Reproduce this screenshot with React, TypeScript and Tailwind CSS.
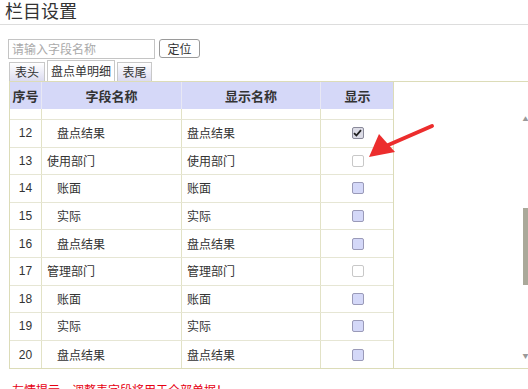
import React from "react";

type Row = {
  no: number;
  field: string;
  label: string;
  indent: boolean;
  state: "checked" | "off" | "blank";
};

const rows: Row[] = [
  { no: 12, field: "盘点结果", label: "盘点结果", indent: true, state: "checked" },
  { no: 13, field: "使用部门", label: "使用部门", indent: false, state: "blank" },
  { no: 14, field: "账面", label: "账面", indent: true, state: "off" },
  { no: 15, field: "实际", label: "实际", indent: true, state: "off" },
  { no: 16, field: "盘点结果", label: "盘点结果", indent: true, state: "off" },
  { no: 17, field: "管理部门", label: "管理部门", indent: false, state: "blank" },
  { no: 18, field: "账面", label: "账面", indent: true, state: "off" },
  { no: 19, field: "实际", label: "实际", indent: true, state: "off" },
  { no: 20, field: "盘点结果", label: "盘点结果", indent: true, state: "off" },
];

const Check = ({ state }: { state: Row["state"] }) => {
  if (state === "checked") {
    return (
      <span className="flex h-[12px] w-[12px] items-center justify-center rounded-[2px] border border-[#8a8a9a] bg-[#dcdce6]">
        <svg width="9" height="8" viewBox="0 0 9 8">
          <path d="M1 4.2 L3.4 6.5 L8 1.2" fill="none" stroke="#222" strokeWidth="1.8" />
        </svg>
      </span>
    );
  }
  if (state === "blank") {
    return <span className="h-[12px] w-[12px] rounded-[2px] border border-[#c8c8c8] bg-white" />;
  }
  return <span className="h-[12px] w-[12px] rounded-[2px] border border-[#9a9ab8] bg-[#d4d8f8]" />;
};

const cell = "flex items-center border-r border-[#e2e2c6] text-[12px] text-[#333]";

const App = () => {
  return (
    <div className="relative h-[389px] w-[528px] overflow-hidden bg-white font-['Noto_Sans_CJK_SC','Liberation_Sans',sans-serif]">
      {/* title */}
      <div className="h-[26px] border-b border-[#dddddd] pl-[5px]">
        <p className="-mt-[1px] text-[18px] leading-[22px] text-[#333]">栏目设置</p>
      </div>

      {/* search */}
      <div className="mt-[14px] flex items-start pl-[8px]">
        <div className="flex h-[20px] w-[147px] items-center border border-[#c4c4c4] px-[3px] text-[12px] text-[#aaa]">
          请输入字段名称
        </div>
        <button className="ml-[4px] h-[19px] w-[41px] rounded-[3px] border border-[#9a9a9a] bg-white text-[12px] leading-[16px] text-[#333]">
          定位
        </button>
      </div>

      {/* tabs */}
      <div className="relative z-10 mt-[1px] flex items-end pl-[9px]">
        <div className="flex h-[19px] w-[36px] items-center justify-center border border-b-0 border-[#c8c8c8] bg-gradient-to-b from-white to-[#dcdcf0] text-[12px] text-[#333]">
          表头
        </div>
        <div className="ml-[2px] flex h-[21px] w-[68px] items-center justify-center border border-b-0 border-[#c8c8c8] bg-white text-[12px] text-[#333]">
          盘点单明细
        </div>
        <div className="ml-[2px] flex h-[19px] w-[35px] items-center justify-center border border-b-0 border-[#c8c8c8] bg-gradient-to-b from-white to-[#dcdcf0] text-[12px] text-[#333]">
          表尾
        </div>
      </div>

      {/* table area */}
      <div className="ml-[9px] flex h-[288px] border-y border-[#dcdcb8]">
        <div className="w-[385px] shrink-0 border-x border-[#dcdcb8]">
          <div className="grid h-[27px] grid-cols-[32px_140px_139px_73px] bg-[#d5d8f8] text-[13px] font-bold text-[#333]">
            <div className="flex items-center justify-center border-r border-[#e8e8f4]">序号</div>
            <div className="flex items-center justify-center border-r border-[#e8e8f4]">字段名称</div>
            <div className="flex items-center justify-center border-r border-[#e8e8f4]">显示名称</div>
            <div className="flex items-center justify-center">显示</div>
          </div>
          <div className="h-[259px] overflow-hidden">
            <div className="grid h-[11px] grid-cols-[32px_140px_139px_73px] border-b border-[#e6e6d4]">
              <div className="border-r border-[#e2e2c6]" />
              <div className="border-r border-[#e2e2c6]" />
              <div className="border-r border-[#e2e2c6]" />
              <div />
            </div>
            {rows.map((r) => (
              <div
                key={r.no}
                className="grid h-[27.6px] grid-cols-[32px_140px_139px_73px] border-b border-[#e6e6d4] last:border-b-0"
              >
                <div className={`${cell} justify-center font-['Liberation_Sans',sans-serif]`}>{r.no}</div>
                <div className={`${cell} ${r.indent ? "pl-[15px]" : "pl-[5px]"}`}>{r.field}</div>
                <div className={`${cell} pl-[5px]`}>{r.label}</div>
                <div className="flex items-center justify-center">
                  <Check state={r.state} />
                </div>
              </div>
            ))}
          </div>
        </div>

        {/* right blank area with scrollbar */}
        <div className="flex flex-1 justify-end">
          <div className="flex w-[6px] flex-col items-center pb-[9px] pl-[1px] pt-[34px]">
            <span className="text-[6px] leading-none text-[#999]">▲</span>
            <div className="mt-[86px] h-[77px] w-[5px] bg-[#aaa99a]" />
            <div className="flex-1" />
            <span className="text-[6px] leading-none text-[#999]">▼</span>
          </div>
        </div>
      </div>

      {/* hint */}
      <p className="pl-[12px] pt-[13px] text-[12px] leading-[16px] text-[#e60012]">
        友情提示，调整表字段将用于全部单据！
      </p>

      {/* red arrow */}
      <svg className="absolute left-[364px] top-[122px]" width="72" height="40" viewBox="0 0 72 40">
        <path d="M68 4 L22 24" stroke="#ec2d2d" strokeWidth="4" strokeLinecap="round" />
        <polygon points="5,35 15,12 31,30" fill="#ec2d2d" />
      </svg>
    </div>
  );
};

export default App;
